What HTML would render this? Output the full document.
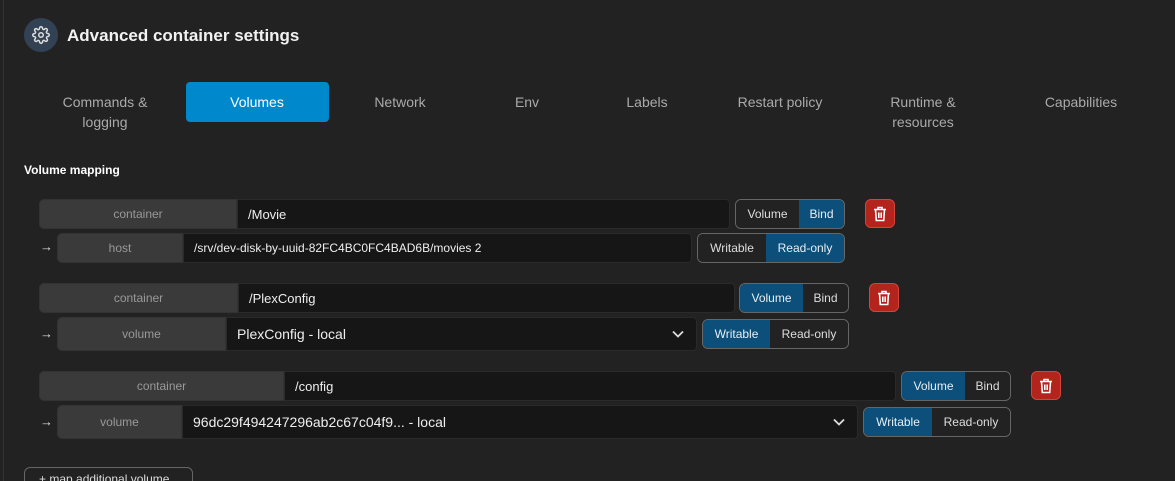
<!DOCTYPE html>
<html><head><style>
*{box-sizing:border-box;margin:0;padding:0}
html,body{width:1175px;height:481px;overflow:hidden}
body{background:#222;font-family:"Liberation Sans",sans-serif;color:#ddd;position:relative}
.a{position:absolute}
.lbl{position:absolute;background:#3a3a3a;color:#999;font-size:12px;display:flex;align-items:center;justify-content:center;border-radius:5px 0 0 5px;border:1px solid #333}
.inp{position:absolute;background:#161616;color:#eee;font-size:13px;display:flex;align-items:center;padding-left:10px;border-radius:0 4px 4px 0;border:1px solid #2a2a2a}
.tg{position:absolute;display:flex;border:1px solid #666;border-radius:6px;overflow:hidden;font-size:12px}
.tg div{display:flex;align-items:center;justify-content:center;color:#ddd;background:#222}
.tg .on{background:#0b4f7a;color:#e8eef4}
.tr{position:absolute;width:30px;height:29px;background:#b3241c;border:1px solid #d6433a;border-radius:6px;display:flex;align-items:center;justify-content:center}
.tab{position:absolute;font-size:14px;color:#aaa;text-align:center;line-height:20px;transform:translateX(-50%)}
.arr{position:absolute;left:40px;font-size:13px;color:#ddd}
.ch{position:absolute;right:12px;top:50%;margin-top:-4px}
</style></head><body>
<div class="a" style="left:3px;top:0;width:1px;height:481px;background:#333"></div>
<div class="a" style="left:24px;top:18px;width:34px;height:34px;border-radius:50%;background:#334155;display:flex;align-items:center;justify-content:center">
<svg width="18" height="18" viewBox="0 0 24 24" fill="none" stroke="#ddd" stroke-width="2"><circle cx="12" cy="12" r="3"/><path d="M19.4 15a1.7 1.7 0 0 0 .3 1.8l.1.1a2 2 0 1 1-2.8 2.8l-.1-.1a1.7 1.7 0 0 0-1.8-.3 1.7 1.7 0 0 0-1 1.5V21a2 2 0 1 1-4 0v-.1a1.7 1.7 0 0 0-1.1-1.5 1.7 1.7 0 0 0-1.8.3l-.1.1a2 2 0 1 1-2.8-2.8l.1-.1a1.7 1.7 0 0 0 .3-1.800 1.7 1.7 0 0 0-1.5-1H3a2 2 0 1 1 0-4h.1a1.7 1.7 0 0 0 1.5-1.1 1.7 1.7 0 0 0-.3-1.8l-.1-.1a2 2 0 1 1 2.8-2.8l.1.1a1.7 1.7 0 0 0 1.8.3H9a1.7 1.7 0 0 0 1-1.5V3a2 2 0 1 1 4 0v.1a1.7 1.7 0 0 0 1 1.5 1.7 1.7 0 0 0 1.8-.3l.1-.1a2 2 0 1 1 2.8 2.8l-.1.1a1.7 1.7 0 0 0-.3 1.8V9a1.7 1.7 0 0 0 1.5 1H21a2 2 0 1 1 0 4h-.1a1.7 1.7 0 0 0-1.5 1z"/></svg></div>
<div class="a" style="left:67px;top:26px;font-size:17px;font-weight:bold;color:#f2f2f2">Advanced container settings</div>
<div class="a" style="left:186px;top:82px;width:143px;height:40px;background:#0088cc;border-radius:4px"></div>
<div class="tab" style="left:105px;top:92px">Commands &amp;<br>logging</div>
<div class="tab" style="left:257px;top:92px;color:#fff">Volumes</div>
<div class="tab" style="left:400px;top:92px">Network</div>
<div class="tab" style="left:527px;top:92px">Env</div>
<div class="tab" style="left:647px;top:92px">Labels</div>
<div class="tab" style="left:780px;top:92px">Restart policy</div>
<div class="tab" style="left:923px;top:92px">Runtime &amp;<br>resources</div>
<div class="tab" style="left:1081px;top:92px">Capabilities</div>
<div class="a" style="left:24px;top:163px;font-size:12px;font-weight:bold;color:#fff">Volume mapping</div>

<!-- row1 -->
<div class="lbl" style="left:39px;top:199px;width:198px;height:30px">container</div>
<div class="inp" style="left:237px;top:199px;width:493px;height:30px">/Movie</div>
<div class="tg" style="left:735px;top:199px;width:110px;height:30px"><div style="width:63px">Volume</div><div class="on" style="flex:1">Bind</div></div>
<div class="tr" style="left:865px;top:199px"><svg width="14" height="16" viewBox="0 0 14 16" fill="none" stroke="#fff" stroke-width="1.6"><path d="M1 3.5h12M5 3.5V1.5h4v2M2.5 3.5l.8 11h7.4l.8-11M5.8 6.5v5.5M8.2 6.5v5.5"/></svg></div>
<div class="arr" style="top:239px">→</div>
<div class="lbl" style="left:57px;top:233px;width:126px;height:30px">host</div>
<div class="inp" style="left:183px;top:233px;width:509px;height:30px;font-size:12px">/srv/dev-disk-by-uuid-82FC4BC0FC4BAD6B/movies 2</div>
<div class="tg" style="left:697px;top:233px;width:148px;height:30px"><div style="width:68px">Writable</div><div class="on" style="flex:1">Read-only</div></div>

<!-- row2 -->
<div class="lbl" style="left:39px;top:283px;width:199px;height:30px">container</div>
<div class="inp" style="left:238px;top:283px;width:497px;height:30px">/PlexConfig</div>
<div class="tg" style="left:739px;top:283px;width:110px;height:30px"><div class="on" style="width:63px">Volume</div><div style="flex:1">Bind</div></div>
<div class="tr" style="left:869px;top:283px"><svg width="14" height="16" viewBox="0 0 14 16" fill="none" stroke="#fff" stroke-width="1.6"><path d="M1 3.5h12M5 3.5V1.5h4v2M2.5 3.5l.8 11h7.4l.8-11M5.8 6.5v5.5M8.2 6.5v5.5"/></svg></div>
<div class="arr" style="top:326px">→</div>
<div class="lbl" style="left:57px;top:317px;width:169px;height:34px">volume</div>
<div class="inp" style="left:226px;top:317px;width:471px;height:34px;font-size:14px">PlexConfig - local<svg class="ch" width="12" height="8" viewBox="0 0 12 8" fill="none" stroke="#ddd" stroke-width="1.8"><path d="M1 1.5l5 5 5-5"/></svg></div>
<div class="tg" style="left:702px;top:319px;width:147px;height:30px"><div class="on" style="width:67px">Writable</div><div style="flex:1">Read-only</div></div>

<!-- row3 -->
<div class="lbl" style="left:39px;top:371px;width:245px;height:30px">container</div>
<div class="inp" style="left:284px;top:371px;width:612px;height:30px">/config</div>
<div class="tg" style="left:901px;top:371px;width:110px;height:30px"><div class="on" style="width:63px">Volume</div><div style="flex:1">Bind</div></div>
<div class="tr" style="left:1031px;top:371px"><svg width="14" height="16" viewBox="0 0 14 16" fill="none" stroke="#fff" stroke-width="1.6"><path d="M1 3.5h12M5 3.5V1.5h4v2M2.5 3.5l.8 11h7.4l.8-11M5.8 6.5v5.5M8.2 6.5v5.5"/></svg></div>
<div class="arr" style="top:414px">→</div>
<div class="lbl" style="left:57px;top:405px;width:125px;height:34px">volume</div>
<div class="inp" style="left:182px;top:405px;width:676px;height:34px;font-size:14px">96dc29f494247296ab2c67c04f9... - local<svg class="ch" width="12" height="8" viewBox="0 0 12 8" fill="none" stroke="#ddd" stroke-width="1.8"><path d="M1 1.5l5 5 5-5"/></svg></div>
<div class="tg" style="left:863px;top:407px;width:148px;height:30px"><div class="on" style="width:68px">Writable</div><div style="flex:1">Read-only</div></div>

<div class="a" style="left:24px;top:467px;width:169px;height:30px;border:1px solid #666;border-radius:6px;font-size:12px;padding:4px 0 0 14px;color:#ddd">+ map additional volume</div>
</body></html>
